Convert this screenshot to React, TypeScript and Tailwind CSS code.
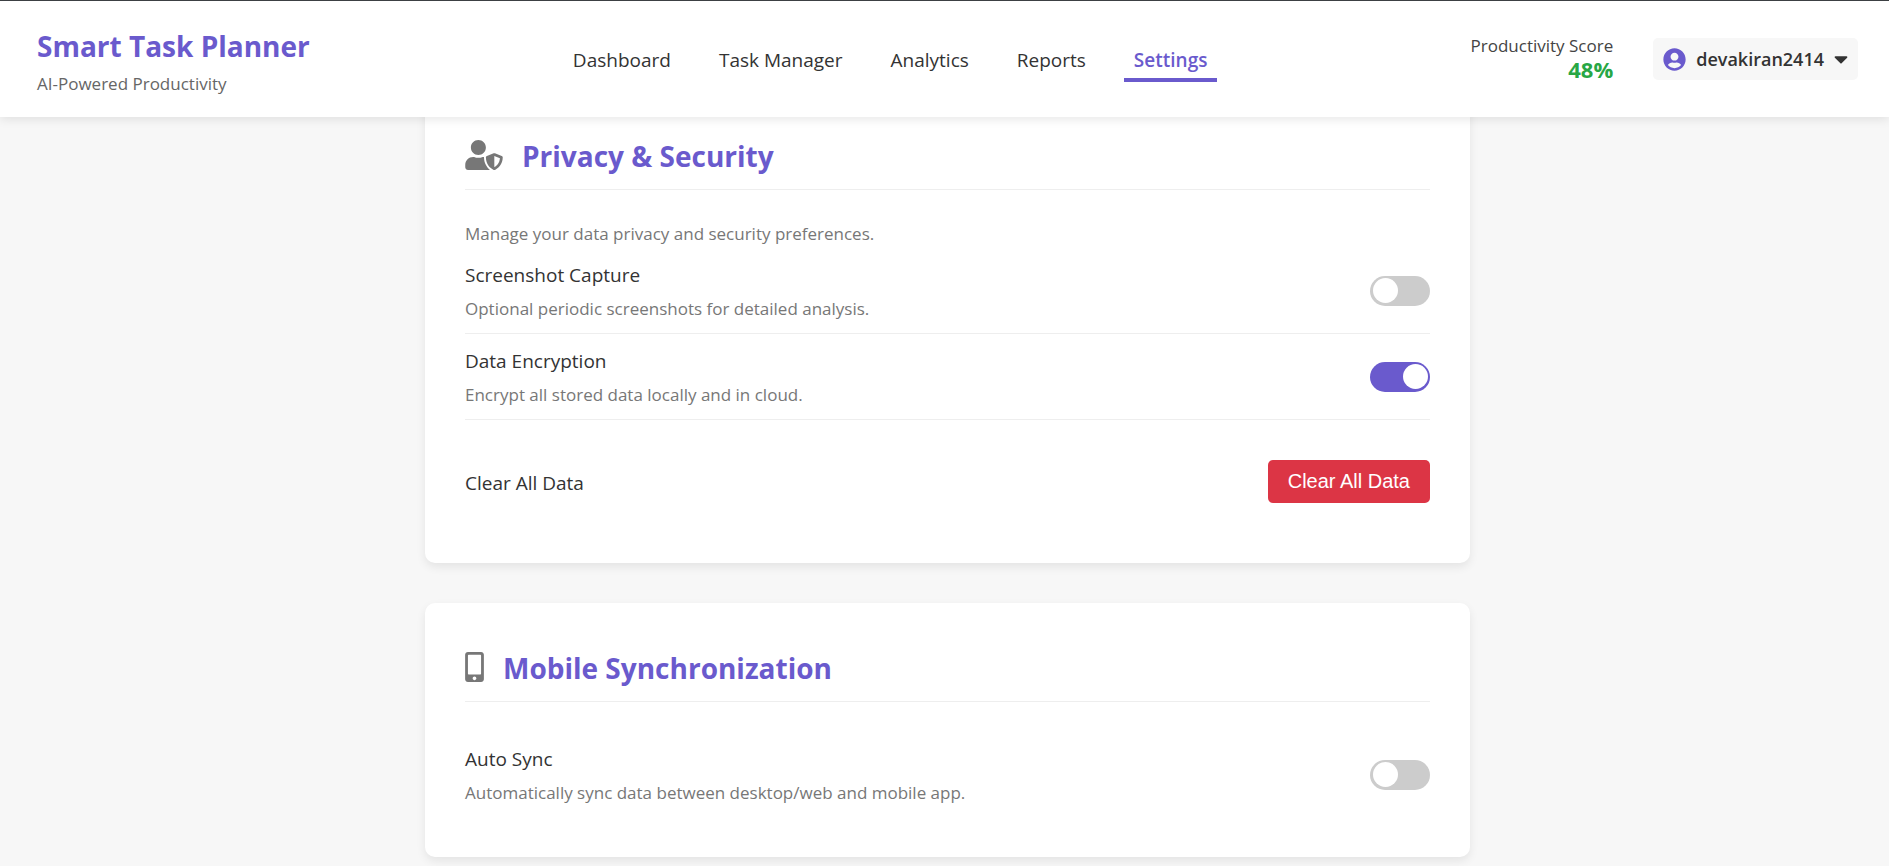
import type { ReactNode } from "react";
import { useId, useState } from "react";
import { FaCaretDown, FaMobileAlt, FaUserCircle, FaUserShield } from "react-icons/fa";

const links = ["Dashboard", "Task Manager", "Analytics", "Reports", "Settings"];

function Header() {
  return (
    <header className="sticky top-0 z-10 flex items-center justify-between border-t border-[#3c4043] bg-white py-[23px] pr-[31px] pl-[37px] shadow-[0_2px_10px_rgba(0,0,0,0.1)]">
      <div className="pt-0.5">
        <h1 className="text-[28px] leading-10 font-bold text-[#6a5acd]">Smart Task Planner</h1>
        <p className="mt-2 text-[17px] leading-5 text-[#666]">AI-Powered Productivity</p>
      </div>
      <nav className="flex gap-7">
        {links.map((link) => (
          <a
            key={link}
            href="#"
            aria-current={link === "Settings" ? "page" : undefined}
            className={
              link === "Settings"
                ? "border-b-4 border-[#6a5acd] px-2.5 pt-2.5 pb-1 text-[19px] leading-7 font-semibold text-[#6a5acd]"
                : "border-b-4 border-transparent px-2.5 pt-2.5 pb-1 text-[19px] leading-7 text-[#333]"
            }
          >
            {link}
          </a>
        ))}
      </nav>
      <div className="flex items-center gap-10">
        <div className="text-right">
          <p className="text-[17px] leading-5 text-[#444]">Productivity Score</p>
          <p className="text-[22px] leading-[26px] font-bold text-[#28a745]">48%</p>
        </div>
        <button
          type="button"
          className="flex h-[42px] items-center gap-2.5 rounded-[5px] bg-[#f7f7f7] px-2.5 text-[18px] font-semibold text-[#333]"
        >
          <FaUserCircle className="size-[23px] text-[#6a5acd]" />
          devakiran2414
          <FaCaretDown className="h-[22px] w-3.5" />
        </button>
      </div>
    </header>
  );
}

function Card({ icon, title, children }: { icon: ReactNode; title: string; children: ReactNode }) {
  return (
    <section className="rounded-[10px] bg-white p-10 shadow-[0_4px_10px_rgba(0,0,0,0.08)]">
      <div className="mb-[30px] flex items-center gap-[19px] border-b border-[#eee] pb-2">
        <span className="pb-0.5 text-[#777]">{icon}</span>
        <h2 className="text-[28px] leading-[50px] font-bold text-[#6a5acd]">{title}</h2>
      </div>
      {children}
    </section>
  );
}

function ToggleRow({ label, detail, initial = false }: { label: string; detail: string; initial?: boolean }) {
  const [on, setOn] = useState(initial);
  const id = useId();
  return (
    <div className="flex items-center justify-between border-b border-[#eee] pt-[11px] pb-2.5 last:border-b-0">
      <div>
        <label htmlFor={id} className="block text-[19px] leading-8 text-[#333]">
          {label}
        </label>
        <p id={`${id}-detail`} className="mt-1 text-[17px] leading-7 text-[#777]">
          {detail}
        </p>
      </div>
      <input
        id={id}
        type="checkbox"
        role="switch"
        aria-describedby={`${id}-detail`}
        checked={on}
        onChange={(e) => setOn(e.target.checked)}
        className="h-[30px] w-[60px] shrink-0 cursor-pointer appearance-none rounded-full bg-[#ccc] py-0.5 pl-[3px] transition-colors before:block before:size-[25px] before:rounded-full before:bg-white before:transition-transform checked:bg-[#6a5acd] checked:before:translate-x-[30px]"
      />
    </div>
  );
}

export default function App() {
  return (
    <div className="min-h-screen bg-[#f7f7f7] font-['Open_Sans','Noto_Sans',sans-serif]">
      <Header />
      <main className="-mt-[26px] pb-2 pl-1.5">
        <div className="mx-auto flex max-w-[1045px] flex-col gap-10">
          <Card icon={<FaUserShield className="h-[30px] w-[38px]" />} title="Privacy & Security">
            <p className="text-[17px] leading-7 text-[#777]">Manage your data privacy and security preferences.</p>
            <ToggleRow label="Screenshot Capture" detail="Optional periodic screenshots for detailed analysis." />
            <ToggleRow label="Data Encryption" detail="Encrypt all stored data locally and in cloud." initial />
            <div className="mt-10 mb-5 flex items-center justify-between">
              <span className="pt-0.5 text-[19px] leading-8 text-[#333]">Clear All Data</span>
              <button
                type="button"
                className="rounded-[5px] bg-[#dc3545] px-5 py-2.5 font-['Liberation_Sans',Arial,sans-serif] text-[20px] leading-[23px] text-white"
              >
                Clear All Data
              </button>
            </div>
          </Card>
          <Card icon={<FaMobileAlt className="h-[30px] w-[19px]" />} title="Mobile Synchronization">
            <ToggleRow label="Auto Sync" detail="Automatically sync data between desktop/web and mobile app." />
          </Card>
        </div>
      </main>
    </div>
  );
}
